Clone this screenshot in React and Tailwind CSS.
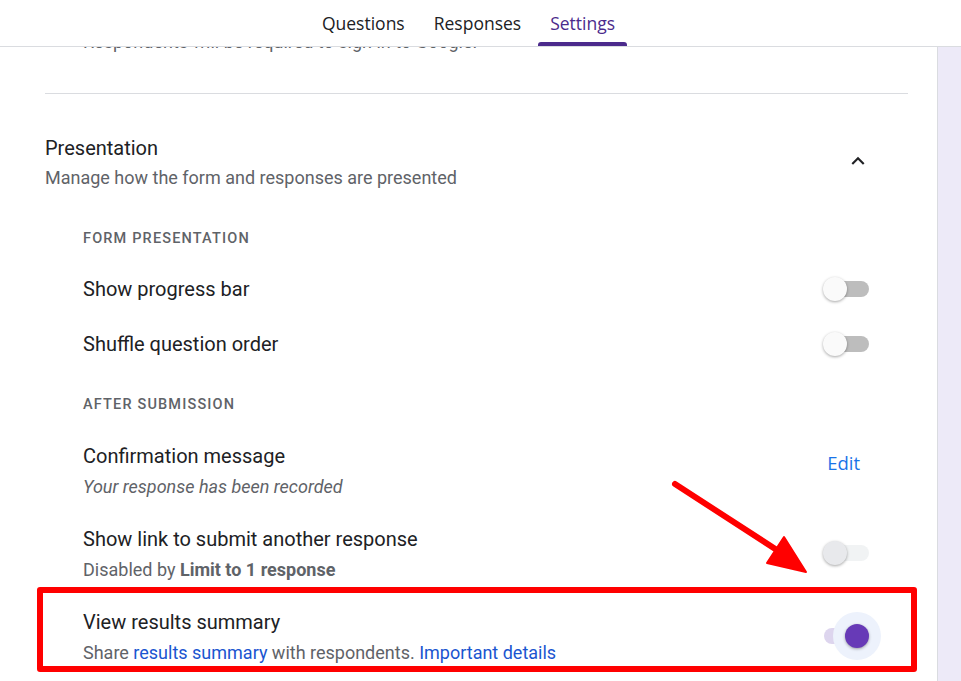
import React from "react";

function Toggle({ state }) {
  if (state === "on") {
    return (
      <div className="relative -top-[2px] w-[46px] h-[24px] shrink-0">
        <div className="absolute left-[1px] top-[4px] w-[38px] h-[16px] rounded-full bg-[#ddd5ee]" />
        <div className="absolute right-[-12px] top-[-12px] w-[48px] h-[48px] rounded-full bg-[#edf2fc]" />
        <div className="absolute right-0 top-0 w-[24px] h-[24px] rounded-full bg-[#673ab7] shadow-[0_1px_3px_rgba(0,0,0,0.35)]" />
      </div>
    );
  }
  const disabled = state === "disabled";
  return (
    <div className={"relative w-[46px] h-[24px] shrink-0 " + (disabled ? "-top-[2px]" : "")}>
      <div
        className={
          "absolute right-0 top-[4px] w-[38px] h-[16px] rounded-full " +
          (disabled ? "bg-[#f1f3f4]" : "bg-[#bdbdbd]")
        }
      />
      <div
        className={
          "absolute left-0 top-0 w-[24px] h-[24px] rounded-full shadow-[0_1px_3px_rgba(0,0,0,0.35)] " +
          (disabled ? "bg-[#e8e9ec]" : "bg-[#fafafa]")
        }
      />
    </div>
  );
}

function Row({ title, subtitle, right, mt }) {
  return (
    <div className={"flex items-center justify-between pr-[39px] " + mt}>
      <div className="flex flex-col">
        <div className="text-[20px] leading-[24px] text-[#202124]">{title}</div>
        {subtitle && <div className="mt-[7px] text-[18px] leading-[24px] text-[#5f6368]">{subtitle}</div>}
      </div>
      {right}
    </div>
  );
}

export default function App() {
  return (
    <div
      className="relative w-[961px] h-[681px] overflow-hidden bg-white"
      style={{ fontFamily: "Roboto, 'Liberation Sans', sans-serif" }}
    >
      {/* Header */}
      <div className="relative z-10 h-[47px] bg-white border-b border-[#dadce0] flex">
        <div
          className="w-[937px] flex justify-center items-end gap-[5px]"
          style={{ fontFamily: "'Open Sans', Roboto, sans-serif" }}
        >
          <div className="px-[12px] h-[46px] flex items-center text-[17.5px] font-medium text-[#202124]">Questions</div>
          <div className="px-[12px] h-[46px] flex items-center text-[17.5px] font-medium text-[#202124]">Responses</div>
          <div className="relative px-[12px] h-[46px] flex items-center text-[17.5px] font-medium text-[#4b2a8c]">
            Settings
            <div className="absolute left-0 right-0 bottom-0 h-[4px] rounded-t-[3px] bg-[#4b2a8c]" />
          </div>
        </div>
      </div>

      <div className="flex h-[634px]">
        {/* Main */}
        <div className="w-[937px] pl-[45px] pr-[29px]">
          <div className="h-[6px] overflow-hidden">
            <div className="pl-[38px] mt-[-15px] text-[18px] leading-[20px] text-[#5f6368] whitespace-nowrap">
              Respondents will be required to sign in to Google.
            </div>
          </div>
          <div className="mt-[40px] h-[1px] bg-[#dadce0]" />

          <div className="mt-[42px] flex justify-between items-start">
            <div>
              <div className="text-[20px] leading-[24px] text-[#202124]">Presentation</div>
              <div className="mt-[6px] text-[18px] leading-[24px] text-[#5f6368]">
                Manage how the form and responses are presented
              </div>
            </div>
            <div className="mr-[37px] mt-[12px] w-[26px] h-[26px] flex items-center justify-center">
              <svg width="26" height="26" viewBox="0 0 24 24">
                <path d="M7.41 15.41 12 10.83l4.59 4.58L18 14l-6-6-6 6z" fill="#202124" />
              </svg>
            </div>
          </div>

          <div className="pl-[38px]">
            <div className="mt-[39px] text-[14.5px] leading-[20px] font-medium tracking-[0.08em] text-[#5f6368]">
              FORM PRESENTATION
            </div>
            <Row mt="mt-[28px]" title="Show progress bar" right={<Toggle state="off" />} />
            <Row mt="mt-[31px]" title="Shuffle question order" right={<Toggle state="off" />} />

            <div className="mt-[39px] text-[14.5px] leading-[20px] font-medium tracking-[0.08em] text-[#5f6368]">
              AFTER SUBMISSION
            </div>
            <div className="mt-[29px] flex justify-between items-start pr-[48px]">
              <div>
                <div className="text-[20px] leading-[24px] text-[#202124]">Confirmation message</div>
                <div className="mt-[7px] text-[18px] leading-[24px] italic text-[#5f6368]">
                  Your response has been recorded
                </div>
              </div>
              <div
                className="mt-[7px] text-[18.5px] leading-[24px] font-medium text-[#1a73e8]"
                style={{ fontFamily: "'Open Sans', Roboto, sans-serif" }}
              >
                Edit
              </div>
            </div>

            <Row
              mt="mt-[28px]"
              title="Show link to submit another response"
              subtitle={
                <>
                  Disabled by <span className="font-bold">Limit to 1 response</span>
                </>
              }
              right={<Toggle state="disabled" />}
            />
            <Row
              mt="mt-[28px]"
              title="View results summary"
              subtitle={
                <>
                  Share <span className="text-[#1a55d0]">results summary</span> with respondents.{" "}
                  <span className="text-[#1a55d0]">Important details</span>
                </>
              }
              right={<Toggle state="on" />}
            />
          </div>
        </div>
        {/* Right band */}
        <div className="flex-1 border-l border-[#dadce0] bg-[#edeaf8]" />
      </div>

      {/* Annotations */}
      <div className="absolute left-[37px] top-[587px] w-[880px] h-[85px] border-[6px] border-[#ff0000] rounded-[3px]" />
      <svg className="absolute left-0 top-0 pointer-events-none" width="961" height="681">
        <line x1="675" y1="484" x2="783" y2="554" stroke="#ff0000" strokeWidth="6" strokeLinecap="round" />
        <polygon points="767,563 784,537 806,572" fill="#ff0000" stroke="#ff0000" strokeWidth="2" strokeLinejoin="round" />
      </svg>
    </div>
  );
}
